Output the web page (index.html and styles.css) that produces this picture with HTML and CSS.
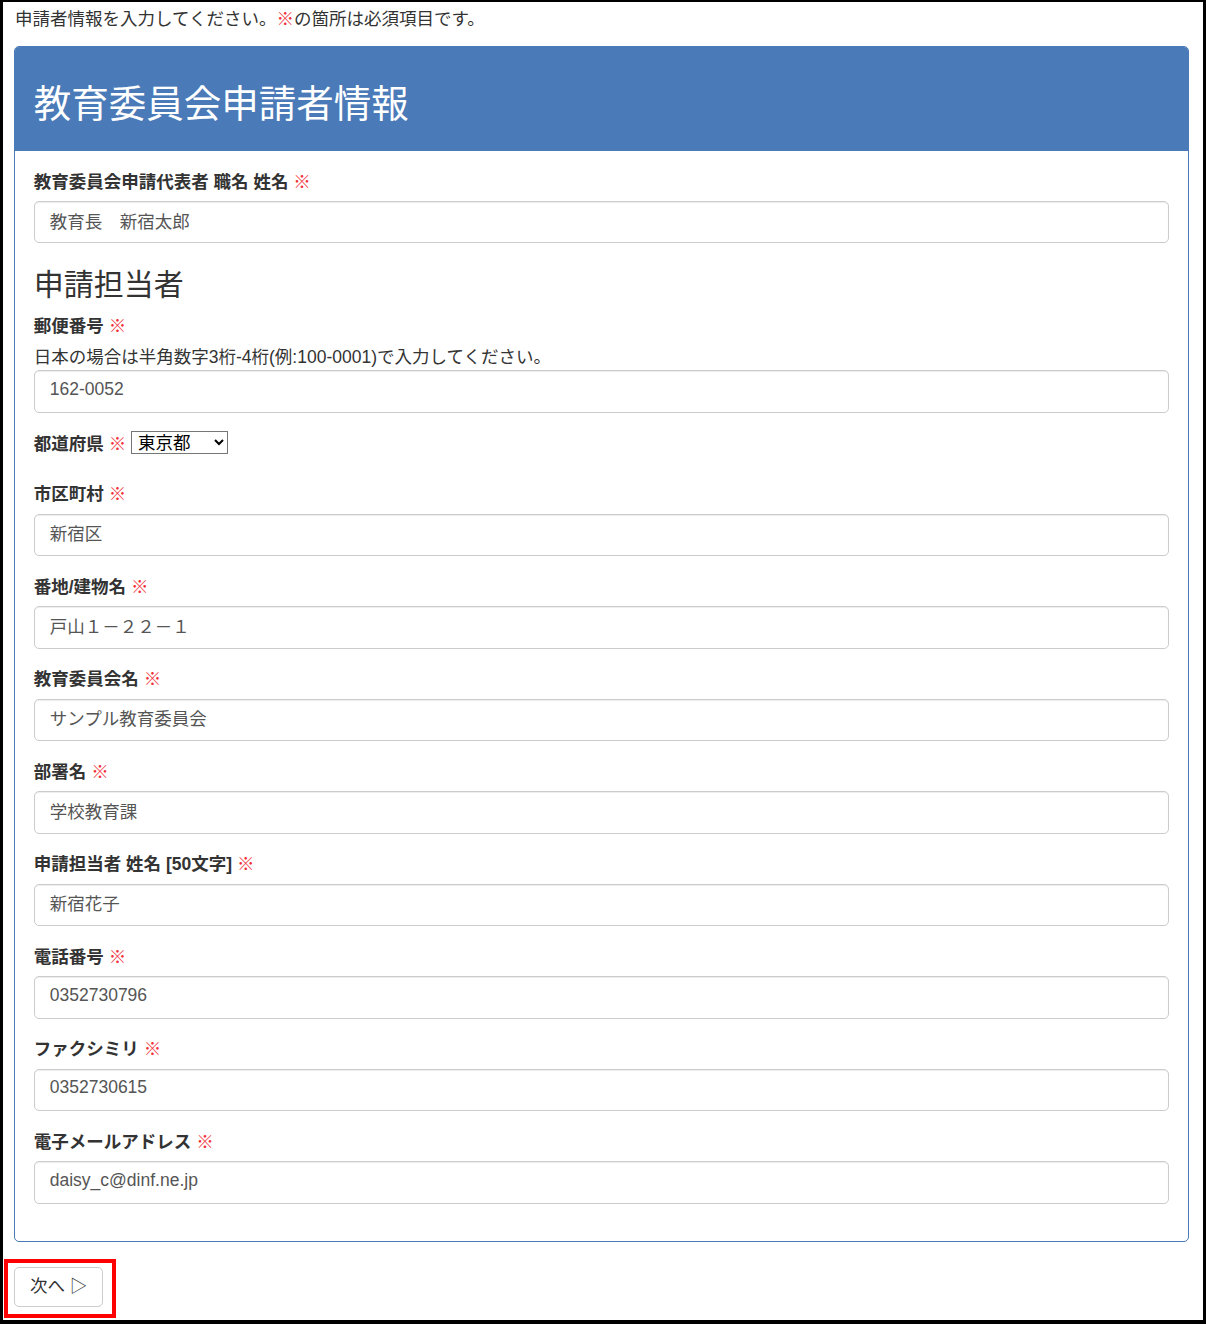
FILE: index.html
```
<!DOCTYPE html>
<html lang="ja">
<head>
  <meta charset="UTF-8" />
  <meta name="viewport" content="width=device-width, initial-scale=1.0"/>
  <title>教育委員会申請者情報</title>
  <link rel="stylesheet" href="styles.css">
</head>
<body>
<div class="frame">
  <div class="container">

    <p class="intro">申請者情報を入力してください。<span class="req">※</span>の箇所は必須項目です。</p>

    <div class="panel">
      <div class="panel-heading">
        <h2>教育委員会申請者情報</h2>
      </div>
      <div class="panel-body">

        <div class="form-group">
          <label>教育委員会申請代表者 職名 姓名 <span class="req">※</span></label>
          <input type="text" class="form-control" value="教育長　新宿太郎">
        </div>

        <h3>申請担当者</h3>

        <div class="form-group">
          <label>郵便番号 <span class="req">※</span></label>
          <div class="help">日本の場合は半角数字3桁-4桁(例:100-0001)で入力してください。</div>
          <input type="text" class="form-control" value="162-0052">
        </div>

        <div class="form-group">
          <label>都道府県 <span class="req">※</span>
            <select class="pref">
              <option>東京都</option>
            </select>
          </label>
        </div>

        <div class="form-group">
          <label>市区町村 <span class="req">※</span></label>
          <input type="text" class="form-control" value="新宿区">
        </div>

        <div class="form-group">
          <label>番地/建物名 <span class="req">※</span></label>
          <input type="text" class="form-control" value="戸山１－２２－１">
        </div>

        <div class="form-group">
          <label>教育委員会名 <span class="req">※</span></label>
          <input type="text" class="form-control" value="サンプル教育委員会">
        </div>

        <div class="form-group">
          <label>部署名 <span class="req">※</span></label>
          <input type="text" class="form-control" value="学校教育課">
        </div>

        <div class="form-group">
          <label>申請担当者 姓名 [50文字] <span class="req">※</span></label>
          <input type="text" class="form-control" value="新宿花子">
        </div>

        <div class="form-group">
          <label>電話番号 <span class="req">※</span></label>
          <input type="text" class="form-control" value="0352730796">
        </div>

        <div class="form-group">
          <label>ファクシミリ <span class="req">※</span></label>
          <input type="text" class="form-control" value="0352730615">
        </div>

        <div class="form-group">
          <label>電子メールアドレス <span class="req">※</span></label>
          <input type="text" class="form-control" value="daisy_c@dinf.ne.jp">
        </div>

      </div>
    </div>

    <div class="actions">
      <button class="btn">次へ ▷</button>
      <div class="mark"></div>
    </div>

  </div>
</div>
</body>
</html>
```

FILE: styles.css
```
html, body {
  margin: 0;
  padding: 0;
  background: #fff;
}

body {
  font-family: "Liberation Sans", "Noto Sans CJK JP", sans-serif;
  font-size: 17.5px;
  line-height: 25px;
  color: #333;
}

.frame {
  height: 1324px;
  box-sizing: border-box;
  border-style: solid;
  border-color: #000;
  border-width: 2px 3px 4px 3px;
  overflow: hidden;
}

.container {
  padding: 4.5px 14px 0 11px;
}

.intro {
  margin: 0 0 14.5px 1px;
}

.req {
  color: #f2303a;
  font-weight: normal;
}

.panel {
  border: 1.25px solid #4a7ab8;
  border-radius: 5px;
  margin-bottom: 25px;
}

.panel-heading {
  background: #4a7ab8;
  color: #fff;
  padding: 12.5px 18.75px;
  border-radius: 4px 4px 0 0;
}

.panel-heading h2 {
  margin: 24px 0 13.5px;
  font-size: 37.5px;
  line-height: 41.25px;
  font-weight: normal;
}

.panel-body {
  padding: 18.75px;
}

.panel-body h3 {
  margin: 25px 0 12.5px;
  font-size: 30px;
  line-height: 33px;
  font-weight: normal;
}

.form-group {
  margin-bottom: 18.75px;
}

.form-group label {
  display: inline-block;
  margin-bottom: 6.25px;
  font-weight: bold;
}

.help {
  color: #333;
}

.form-control {
  display: block;
  width: 100%;
  height: 42.5px;
  box-sizing: border-box;
  padding: 5.5px 15px 9.5px;
  font-family: inherit;
  font-size: 17.5px;
  line-height: 25px;
  color: #555;
  background: #fff;
  border: 1.25px solid #ccc;
  border-radius: 5px;
  box-shadow: inset 0 1px 1px rgba(0,0,0,0.075);
}

.pref {
  width: 97px;
  height: 23px;
  margin-left: 0;
  font-family: inherit;
  font-size: 17.5px;
  font-weight: normal;
  color: #000;
  border: 1px solid #767676;
  border-radius: 0;
  background: #fff;
  padding: 0 2px;
  vertical-align: 1px;
}

.actions {
  position: relative;
  display: inline-block;
}

.btn {
  display: inline-block;
  padding: 6.25px 15px;
  font-family: inherit;
  font-size: 17.5px;
  line-height: 25px;
  color: #333;
  background: #fff;
  border: 1.25px solid #ccc;
  border-radius: 5px;
  cursor: pointer;
}

.mark {
  position: absolute;
  left: -10px;
  top: -8px;
  width: 104px;
  height: 51px;
  border: 4px solid #f00;
}
```
